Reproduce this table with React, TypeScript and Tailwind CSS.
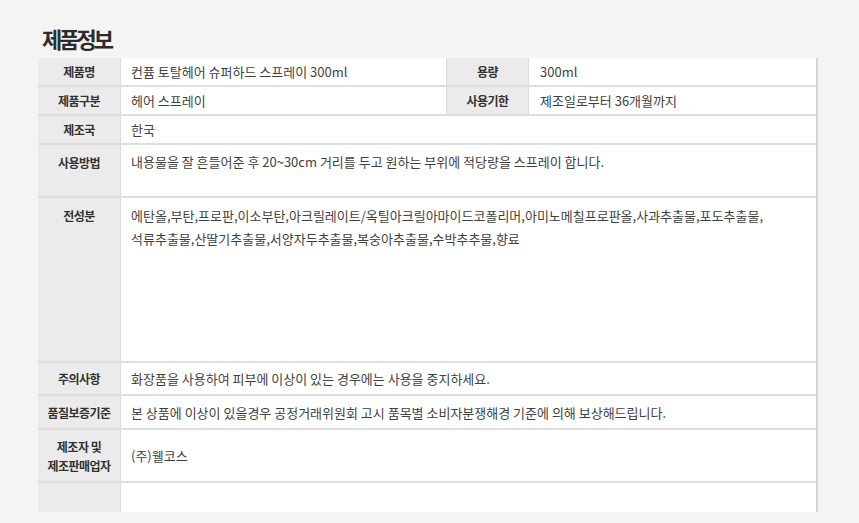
import React from "react";

const font = "font-['Noto_Sans_CJK_KR','Noto_Sans',sans-serif]";

function Label({ children, className = "" }: { children: React.ReactNode; className?: string }) {
  return (
    <div
      className={`w-[83px] shrink-0 bg-[#ebebeb] border-r border-[#dcdcdc] flex justify-center text-center text-[12px] font-bold text-[#333] tracking-[-0.5px] leading-[19px] ${className}`}
    >
      {children}
    </div>
  );
}

function Row({ h, children, last = false }: { h: string; children: React.ReactNode; last?: boolean }) {
  return (
    <div className={`flex items-stretch ${h} ${last ? "" : "border-b-2 border-[#dedede]"}`}>{children}</div>
  );
}

const val = "text-[13px] text-[#3f3f3f] tracking-[0px] leading-[23px]";

export default function App() {
  return (
    <div className={`w-[859px] h-[523px] bg-[#f4f4f4] ${font}`}>
      <div className="pt-[27px] pl-[42px]">
        <h1 className="text-[22px] leading-[22px] font-bold text-[#2b2b2b] tracking-[-3px]">제품정보</h1>
      </div>
      <div className="ml-[38px] mt-[9px] w-[780px] bg-white border-r-2 border-[#d4d4d4]">
        <Row h="h-[29px]">
          <Label className="items-center">제품명</Label>
          <div className={`w-[325px] shrink-0 pl-[10px] flex items-center ${val}`}>컨퓸 토탈헤어 슈퍼하드 스프레이 300ml</div>
          <Label className="items-center w-[73px] border-l">용량</Label>
          <div className={`flex-1 pl-[11px] flex items-center ${val}`}>300ml</div>
        </Row>
        <Row h="h-[29px]">
          <Label className="items-center">제품구분</Label>
          <div className={`w-[325px] shrink-0 pl-[10px] flex items-center ${val}`}>헤어 스프레이</div>
          <Label className="items-center w-[73px] border-l">사용기한</Label>
          <div className={`flex-1 pl-[11px] flex items-center ${val}`}>제조일로부터 36개월까지</div>
        </Row>
        <Row h="h-[29px]">
          <Label className="items-center">제조국</Label>
          <div className={`flex-1 pl-[10px] flex items-center ${val}`}>한국</div>
        </Row>
        <Row h="h-[53px]">
          <Label className="items-start pt-[8px]">사용방법</Label>
          <div className={`flex-1 pl-[10px] pt-[5px] ${val}`}>
            내용물을 잘 흔들어준 후 20~30cm 거리를 두고 원하는 부위에 적당량을 스프레이 합니다.
          </div>
        </Row>
        <Row h="h-[165px]">
          <Label className="items-start pt-[8px]">전성분</Label>
          <div className={`flex-1 pl-[10px] pt-[6px] whitespace-nowrap ${val}`}>
            에탄올,부탄,프로판,이소부탄,아크릴레이트/옥틸아크릴아마이드코폴리머,아미노메칠프로판올,사과추출물,포도추출물,
            <br />
            석류추출물,산딸기추출물,서양자두추출물,복숭아추출물,수박추추물,향료
          </div>
        </Row>
        <Row h="h-[33px]">
          <Label className="items-center">주의사항</Label>
          <div className={`flex-1 pl-[10px] flex items-center ${val}`}>
            화장품을 사용하여 피부에 이상이 있는 경우에는 사용을 중지하세요.
          </div>
        </Row>
        <Row h="h-[34px]">
          <Label className="items-center">품질보증기준</Label>
          <div className={`flex-1 pl-[10px] flex items-center ${val}`}>
            본 상품에 이상이 있을경우 공정거래위원회 고시 품목별 소비자분쟁해경 기준에 의해 보상해드립니다.
          </div>
        </Row>
        <Row h="h-[53px]">
          <Label className="items-center">
            제조자 및<br />
            제조판매업자
          </Label>
          <div className={`flex-1 pl-[10px] flex items-center ${val}`}>(주)웰코스</div>
        </Row>
        <Row h="h-[29px]" last>
          <Label className="items-center"> </Label>
          <div className="flex-1" />
        </Row>
      </div>
    </div>
  );
}
